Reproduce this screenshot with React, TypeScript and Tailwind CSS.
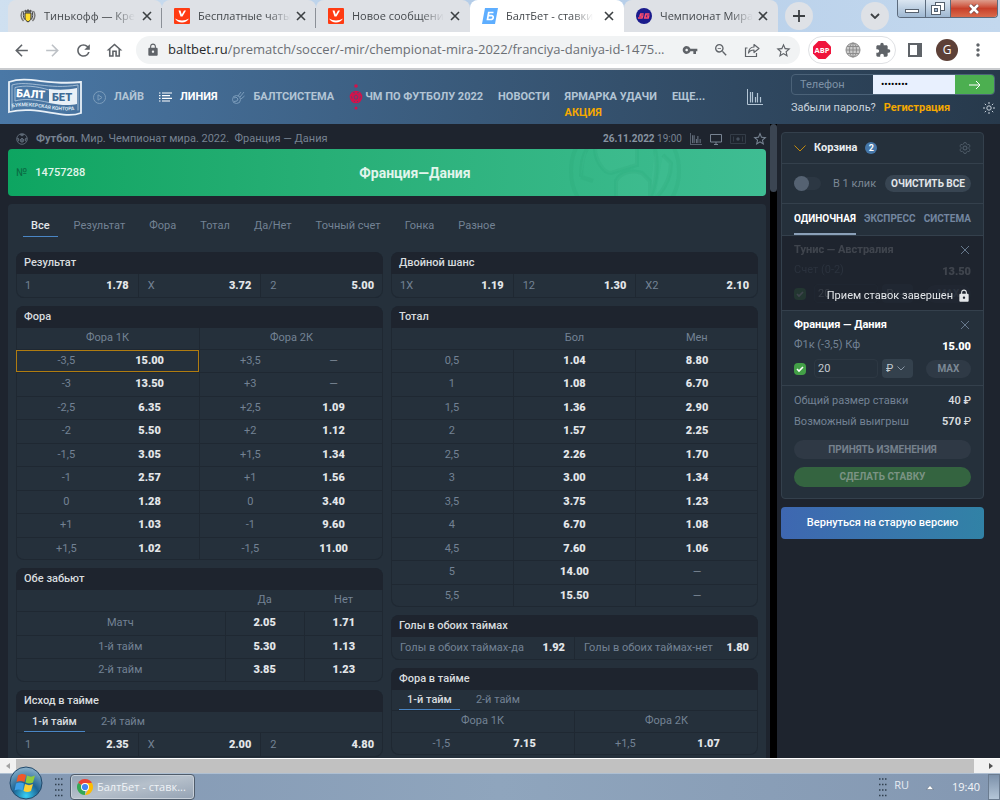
import type { ReactNode } from 'react';
import {
    MdArrowBack,
    MdArrowForward,
    MdExtension,
    MdLock,
    MdMoreVert,
    MdOutlineHome,
    MdOutlineZoomOut,
    MdRefresh,
    MdStarBorder,
    MdVpnKey,
} from 'react-icons/md';

type Outcome = [label: string, odds: string];

interface BrowserTab {
    title: string;
    icon: ReactNode;
    active?: boolean;
}

const handicap: [Outcome, Outcome][] = [
    [['-3,5', '15.00'], ['+3,5', '—']],
    [['-3', '13.50'], ['+3', '—']],
    [['-2,5', '6.35'], ['+2,5', '1.09']],
    [['-2', '5.50'], ['+2', '1.12']],
    [['-1,5', '3.05'], ['+1,5', '1.34']],
    [['-1', '2.57'], ['+1', '1.56']],
    [['0', '1.28'], ['0', '3.40']],
    [['+1', '1.03'], ['-1', '9.60']],
    [['+1,5', '1.02'], ['-1,5', '11.00']],
];

const totals = [
    ['0,5', '1.04', '8.80'],
    ['1', '1.08', '6.70'],
    ['1,5', '1.36', '2.90'],
    ['2', '1.57', '2.25'],
    ['2,5', '2.26', '1.70'],
    ['3', '3.00', '1.34'],
    ['3,5', '3.75', '1.23'],
    ['4', '6.70', '1.08'],
    ['4,5', '7.60', '1.06'],
    ['5', '14.00', '—'],
    ['5,5', '15.50', '—'],
];

const bothScore = [
    ['Матч', '2.05', '1.71'],
    ['1-й тайм', '5.30', '1.13'],
    ['2-й тайм', '3.85', '1.23'],
];

const marketTabs = ['Все', 'Результат', 'Фора', 'Тотал', 'Да/Нет', 'Точный счет', 'Гонка', 'Разное'];

/* ---------- icons ---------- */

function TinkoffIcon() {
    return (
        <svg viewBox="0 0 16 16" className="size-4" fill="none">
            <path d="M2.500 3c-1.800 3-1.800 7 1 10M13.500 3c1.800 3 1.800 7-1 10" stroke="#777" strokeWidth="1.400" />
            <path d="M4.300 2.500c-1.500 3-1.300 7 .4 9M11.700 2.500c1.500 3 1.300 7-.4 9" stroke="#444" />
            <path d="M5 1.500l1.500 1L8 1l1.500 1.500 1.500-1V4.500H5z" fill="#555" />
            <path d="M5 5h6v5c0 2-1.500 3-3 4-1.500-1-3-2-3-4z" fill="#ffdd2d" stroke="#333" />
        </svg>
    );
}

function ReviewIcon() {
    return (
        <svg viewBox="0 0 16 16" className="size-4">
            <rect width="16" height="16" rx="1" fill="#ff3b12" />
            <path d="M4.500 2.500h2l1.300 4 2.200-4h2L8.500 8.500h-2z" fill="#fff" />
            <path d="M1 10.500c4 2.500 10 2.500 14 0-1.500 2.500-4 4-7 4s-5.500-1.500-7-4z" fill="#fff" />
        </svg>
    );
}

function BaltbetIcon() {
    return (
        <svg viewBox="0 0 16 16" className="size-4">
            <path d="M3 0h13l-3 16H0z" fill="#5eaeff" />
            <path d="M11.500 4.500H6.700L5.500 11.500h3c3.300 0 3.600-3.800 1-3.800H6.300" fill="none" stroke="#fff" strokeWidth="1.700" />
        </svg>
    );
}

function SportIcon() {
    return (
        <svg viewBox="0 0 16 16" className="size-4">
            <circle cx="8" cy="8" r="8" fill="#1a1b8c" />
            <path d="M2 10h4l.7-2H4l.7-2h3M13.500 6H9.800L8.700 10h3.500l.5-2h-2" fill="none" stroke="#ff4d6d" strokeWidth="1.500" />
        </svg>
    );
}

function ChromeIcon() {
    return (
        <svg viewBox="0 0 16 16" className="size-4">
            <path d="M8 8L1.070 4A8 8 0 0 1 14.930 4z" fill="#ea4335" />
            <path d="M8 8v8A8 8 0 0 1 1.070 4z" fill="#34a853" />
            <path d="M8 4h6.930A8 8 0 0 1 8 16l3.500-6z" fill="#fbbc05" />
            <circle cx="8" cy="8" r="4" fill="#fff" />
            <circle cx="8" cy="8" r="3.100" fill="#4285f4" />
        </svg>
    );
}

function CrossIcon() {
    return (
        <svg viewBox="0 0 10 10" className="size-2.5">
            <path d="M1 1l8 8M9 1L1 9" stroke="currentColor" strokeWidth="1.600" />
        </svg>
    );
}

function ThinCross() {
    return (
        <svg viewBox="0 0 10 10" className="size-2.5">
            <path d="M1 1l8 8M9 1L1 9" stroke="#66788c" strokeWidth="1" />
        </svg>
    );
}

function ShareIcon() {
    return (
        <svg viewBox="0 0 16 16" className="size-4" fill="none" stroke="#5f6368" strokeWidth="1.200">
            <path d="M3.500 6H1.500v8.500h11V11" />
            <path d="M10 2.500l5 4-5 4V8c-3 0-4.500 1-5.500 3 .3-3.500 2.500-6 5.500-6z" strokeLinejoin="round" />
        </svg>
    );
}

function GlobeIcon() {
    return (
        <svg viewBox="0 0 16 16" className="size-4" fill="none" stroke="#8c8c8c">
            <circle cx="8" cy="8" r="7" fill="#ccc" />
            <path d="M8 1v14M1 8h14M2 4.500h12M2 11.500h12" />
            <ellipse cx="8" cy="8" rx="3.500" ry="7" />
        </svg>
    );
}

function StatsIcon({ className }: { className: string }) {
    return (
        <svg viewBox="0 0 16 16" className={className} fill="none" stroke="currentColor">
            <path d="M.5 0v15.500H16" />
            <path d="M3.500 3v10.500M5.500 3v10.500M8.500 8v5.500M10.500 4v9.500M13.500 8v5.500" strokeWidth="1.200" />
        </svg>
    );
}

function BallIcon() {
    return (
        <svg viewBox="0 0 12 12" className="size-3" fill="none" stroke="#5d6875">
            <circle cx="6" cy="6" r="5.300" />
            <path d="M4 1.500L6 3l2-1.500zM6 5L4 7l1 2h2l1-2zM1 5l2 1-1 2.500M11 5L9 6l1 2.500" fill="#4c5765" />
        </svg>
    );
}

function CupIcon() {
    return (
        <svg viewBox="0 0 14 28" className="h-7 w-3.5" fill="none">
            <circle cx="7" cy="3" r="1.800" fill="#d0134c" />
            <circle cx="7" cy="25" r="1.500" fill="#d0134c" />
            <circle cx="7" cy="14" r="6.300" fill="#d0134c" />
            <path d="M7 12l2 1.500-.8 2.500H5.800L5 13.500zM4 9.500l2 .5M8 10l2-.5M2.500 13.500l.5 2M11.500 13.500l-.5 2M5 18.500h1M8 18.500h1" stroke="#5b4672" />
        </svg>
    );
}

function LogoMark() {
    return (
        <svg viewBox="0 0 74 38" className="h-[38px] w-[74px]" fill="none">
            <path d="M1 4C20-3 40 8 73 4v31C54 42 30 27 1 34z" stroke="#e8f0f7" strokeWidth="1.800" />
            <path d="M4 31.500V7c17-5 36 5 66 0v25.500" stroke="#b9cde0" strokeWidth=".8" />
            <path d="M41 11c9 1 19 1 28-1v16c-8 2-18 1-28-1z" fill="#e8f0f7" />
            <path d="M41 12C28 8 17 7 7 9.500V23c10-3 22-1 34 1.500" stroke="#b9cde0" strokeWidth=".8" />
            <text x="8" y="19" fontFamily="Roboto" fontSize="11" fontWeight="900" fill="#fff" transform="rotate(3 8 19)">БАЛТ</text>
            <text x="44" y="23" fontFamily="Roboto" fontSize="11" fontWeight="900" fill="#3f6b95">БЕТ</text>
            <path id="motto" d="M4 29.500c24-5 40 6 66 2" />
            <text fontFamily="Roboto" fontSize="5" fontWeight="700" fill="#dbe7f1">
                <textPath href="#motto">БУКМЕКЕРСКАЯ КОНТОРА</textPath>
            </text>
        </svg>
    );
}

function StartOrb() {
    return (
        <svg viewBox="0 0 34 34" className="size-[34px]">
            <defs>
                <radialGradient id="orb" cx=".5" cy=".9" r=".9">
                    <stop offset="0" stopColor="#38d0f5" />
                    <stop offset=".45" stopColor="#1d6494" />
                    <stop offset="1" stopColor="#8fb4cd" />
                </radialGradient>
            </defs>
            <circle cx="17" cy="17" r="16" fill="url(#orb)" stroke="#21496b" />
            <path d="M9 9.500c3-2 5-2 8-.5L15.500 16c-3-1.500-5-1.500-8 0z" fill="#f0582a" />
            <path d="M18 9.500c3 1.500 5 1.500 8 0l-2 7c-3 1.500-5 1-7.500 0z" fill="#8fcb3c" />
            <path d="M7 17.500c3-1.500 5-1.500 8 0L13.500 24.500c-3-1.500-5-1.500-8 0z" fill="#3fa0e8" />
            <path d="M16 18c3 1.500 5 1.500 8 0l-2 7c-3 1.500-5 1-7.500 0z" fill="#fdcf33" />
        </svg>
    );
}

const browserTabs: BrowserTab[] = [
    { title: 'Тинькофф — Кре', icon: <TinkoffIcon /> },
    { title: 'Бесплатные чаты', icon: <ReviewIcon /> },
    { title: 'Новое сообщени', icon: <ReviewIcon /> },
    { title: 'БалтБет - ставки', icon: <BaltbetIcon />, active: true },
    { title: 'Чемпионат Мира', icon: <SportIcon /> },
];

/* ---------- browser ---------- */

function TabStrip() {
    return (
        <div className="flex h-8 shrink-0 items-center bg-gradient-to-r from-[#cfe0f0] via-[#b3cce8] to-[#c3d8ee] pl-2">
            {browserTabs.map((tab, i) => (
                <div
                    key={tab.title}
                    className={`relative flex h-full w-[154px] items-center rounded-t-lg pr-1.5 pl-3 ${tab.active ? 'bg-white' : 'bg-[#dee1e6]'}`}
                >
                    {tab.icon}
                    <span className="ml-2 text-[11px] whitespace-nowrap text-[#45494d] [mask-image:linear-gradient(to_right,black_75%,transparent)]">
                        {tab.title}
                    </span>
                    <button type="button" aria-label="Закрыть вкладку" className="ml-auto p-1 text-[#3c4043]">
                        <CrossIcon />
                    </button>
                    {i < 2 && <span className="absolute top-2 right-0 h-5 w-px bg-[#8b9097]" />}
                </div>
            ))}
            <button type="button" aria-label="Новая вкладка" className="ml-[7px] flex size-7 items-center justify-center rounded-full bg-[#dee1e6]">
                <svg viewBox="0 0 12 12" className="size-3">
                    <path d="M6 0v12M0 6h12" stroke="#3c4043" strokeWidth="1.800" />
                </svg>
            </button>
            <button type="button" aria-label="Поиск вкладок" className="ml-12 flex size-7 items-center justify-center rounded-full bg-[#dee1e6]">
                <svg viewBox="0 0 10 6" className="h-1.5 w-2.5">
                    <path d="M1 1l4 4 4-4" stroke="#3c4043" strokeWidth="1.800" fill="none" />
                </svg>
            </button>
            <div className="mr-0.5 ml-auto flex h-[18px] self-start overflow-hidden rounded-b border border-t-0 border-[#5c6b7d]">
                <button type="button" aria-label="Свернуть" className="flex w-7 items-end justify-center border-r border-[#5c6b7d] bg-gradient-to-b from-[#dbe6f1] to-[#9fb8d2] pb-1">
                    <span className="h-1 w-3.5 border border-[#55606d] bg-white" />
                </button>
                <button type="button" aria-label="Восстановить" className="flex w-[25px] items-center justify-center border-r border-[#5c6b7d] bg-gradient-to-b from-[#dbe6f1] to-[#9fb8d2]">
                    <svg viewBox="0 0 14 13" className="h-[13px] w-3.5" fill="#fff" stroke="#55606d">
                        <rect x="4.500" y=".5" width="9" height="8" />
                        <rect x=".5" y="3.500" width="9" height="9" />
                        <rect x="3.500" y="6.500" width="3" height="3" fill="#9fb8d2" />
                    </svg>
                </button>
                <button type="button" aria-label="Закрыть" className="flex w-[46px] items-center justify-center bg-gradient-to-b from-[#dd9c8c] via-[#c8402a] to-[#d96a4c]">
                    <svg viewBox="0 0 12 10" className="h-2.5 w-3">
                        <path d="M2 1l8 8M10 1L2 9" stroke="#6b3a3a" strokeWidth="4" />
                        <path d="M2 1l8 8M10 1L2 9" stroke="#fff" strokeWidth="2.600" />
                    </svg>
                </button>
            </div>
        </div>
    );
}

function Toolbar() {
    return (
        <div className="flex h-[38px] shrink-0 items-center border-b-2 border-[#c9cbce] bg-white pr-3 pl-3 text-[#5f6368]">
            <div className="flex items-center gap-3">
                <button type="button" aria-label="Назад"><MdArrowBack className="size-[19px]" /></button>
                <button type="button" aria-label="Вперед" className="text-[#bdc1c6]"><MdArrowForward className="size-[19px]" /></button>
                <button type="button" aria-label="Обновить"><MdRefresh className="size-[19px]" /></button>
                <button type="button" aria-label="Домой"><MdOutlineHome className="size-[19px]" /></button>
            </div>
            <div className="ml-3 flex h-7 min-w-0 flex-1 items-center rounded-full bg-[#f1f3f4] pr-2 pl-2.5">
                <MdLock className="size-3.5 shrink-0" />
                <span className="ml-2 min-w-0 flex-1 text-[13px] whitespace-nowrap text-[#6b6f74]">
                    <span className="text-[#27292c]">baltbet.ru</span>/prematch/soccer/-mir/chempionat-mira-2022/franciya-daniya-id-1475...
                </span>
                <div className="flex items-center gap-[15px] pl-2">
                    <MdVpnKey className="size-4" />
                    <MdOutlineZoomOut className="size-4" />
                    <ShareIcon />
                    <MdStarBorder className="size-[17px]" />
                </div>
            </div>
            <div className="ml-2 flex h-7 items-center gap-3.5 rounded-full border border-[#dfe1e4] px-1">
                <svg viewBox="0 0 18 18" className="size-[18px]">
                    <path d="M5.500 0h7L18 5.500v7L12.500 18h-7L0 12.500v-7z" fill="#f0143c" />
                    <text x="9" y="12" textAnchor="middle" fontFamily="Open Sans" fontSize="7.500" fontWeight="700" fill="#fff">ABP</text>
                </svg>
                <GlobeIcon />
                <MdExtension className="size-4" />
            </div>
            <div className="ml-3 flex items-center">
                <svg viewBox="0 0 14 14" className="size-3.5">
                    <path d="M1 1h12v12H1z" fill="none" stroke="currentColor" strokeWidth="2" />
                    <path d="M9 1h4v12H9z" fill="currentColor" />
                </svg>
                <span className="ml-3.5 flex size-[22px] items-center justify-center rounded-full bg-[#5d4037] text-xs text-white">G</span>
                <MdMoreVert className="ml-2.5 size-5" />
            </div>
        </div>
    );
}

/* ---------- site header ---------- */

function SiteHeader() {
    return (
        <header className="flex h-[54px] shrink-0 bg-gradient-to-r from-[#4a78a6] to-[#27394b] pr-[5px] pl-2">
            <a href="#" aria-label="БалтБет" className="self-center"><LogoMark /></a>
            <nav className="ml-[11px] flex flex-1 items-center gap-[15px] font-bold whitespace-nowrap text-[#b3c5d5]">
                <a href="#" className="flex items-center gap-2">
                    <svg viewBox="0 0 13 13" className="size-[13px] text-[#7c9dbb]" fill="none" stroke="currentColor">
                        <circle cx="6.500" cy="6.500" r="6" />
                        <path d="M5 3.800l4 2.700-4 2.700z" />
                    </svg>
                    ЛАЙВ
                </a>
                <a href="#" className="flex items-center gap-2 text-white">
                    <svg viewBox="0 0 13 10" className="h-2.5 w-[13px]" stroke="currentColor" strokeWidth="1.200">
                        <path d="M0 1h1.500M3 1h10M0 3.700h1.500M3 3.700h8M0 6.400h1.500M3 6.400h10M0 9h1.500M3 9h8" />
                    </svg>
                    ЛИНИЯ
                </a>
                <a href="#" className="flex items-center gap-2">
                    <svg viewBox="0 0 13 13" className="size-[13px] text-[#7c9dbb]" fill="none" stroke="currentColor">
                        <circle cx="4.500" cy="8.500" r="4" />
                        <path d="M2 7l2-1 2 2-1 2-3 .5M6 5l3-4M8 6l4-5M9 8l3.500-3" />
                    </svg>
                    БАЛТСИСТЕМА
                </a>
                <a href="#" className="flex items-center gap-0.5">
                    <CupIcon />
                    ЧМ ПО ФУТБОЛУ 2022
                </a>
                <a href="#">НОВОСТИ</a>
                <a href="#" className="relative">
                    ЯРМАРКА УДАЧИ
                    <span className="absolute top-full left-0 text-[#f5a800]">АКЦИЯ</span>
                </a>
                <a href="#">ЕЩЕ...</a>
                <a href="#" aria-label="Статистика" className="mr-7 ml-auto"><StatsIcon className="size-4" /></a>
            </nav>
            <form className="w-[204px] pt-1">
                <div className="flex h-[21px] overflow-hidden rounded border border-[#4b6278]">
                    <input aria-label="Телефон" placeholder="Телефон" className="w-[81px] px-2 text-white placeholder:text-[#7e92a6]" />
                    <input aria-label="Пароль" type="password" defaultValue="baltbet1" className="w-[82px] bg-[#e8f0fe] px-2 text-[10px] text-black" />
                    <button type="button" aria-label="Войти" className="flex flex-1 items-center justify-center bg-[#4caf50]">
                        <svg viewBox="0 0 12 10" className="h-2.5 w-3" fill="none" stroke="#fff">
                            <path d="M0 5h11M7 1l4 4-4 4" />
                        </svg>
                    </button>
                </div>
                <div className="mt-[5px] flex items-center text-[#c9d3dc]">
                    <a href="#">Забыли пароль?</a>
                    <a href="#" className="ml-2 font-bold text-[#f5a800]">Регистрация</a>
                    <button type="button" aria-label="Тема" className="ml-auto">
                        <svg viewBox="0 0 12 12" className="size-3" fill="none" stroke="#c9d3dc">
                            <circle cx="6" cy="6" r="2.200" />
                            <path d="M6 0v2M6 10v2M0 6h2M10 6h2M1.800 1.800l1.300 1.300M8.900 8.900l1.300 1.300M10.200 1.800L8.900 3.100M3.100 8.900l-1.300 1.300" />
                        </svg>
                    </button>
                </div>
            </form>
        </header>
    );
}

/* ---------- markets ---------- */

function Odds({ value }: { value: string }) {
    if (value === '—') return <span className="text-[#7b8794]">—</span>;
    return <span className="font-black text-[#e3e6e9]">{value}</span>;
}

function Panel({ title, children }: { title: string; children: ReactNode }) {
    return (
        <section className="overflow-hidden rounded-lg bg-[#25303b] inset-ring inset-ring-[#1f2832]">
            <h2 className="h-[22px] bg-[#1e242e] px-2 leading-[22px] font-medium text-[#d8dcdf]">{title}</h2>
            {children}
        </section>
    );
}

function OutcomeRow({ items, className }: { items: Outcome[]; className: string }) {
    return (
        <div className={`flex divide-x divide-[#1f2832] border-b border-[#1f2832] ${className}`}>
            {items.map(([label, odds]) => (
                <button type="button" key={label} className="flex flex-1 items-center justify-between px-[9px] text-[#738294]">
                    {label}
                    <Odds value={odds} />
                </button>
            ))}
        </div>
    );
}

function HandicapTable({ rows, picked }: { rows: [Outcome, Outcome][]; picked?: string }) {
    return (
        <table className="w-full table-fixed text-center text-[#738294]">
            <thead>
                <tr className="h-[21px] divide-x divide-[#1f2832]">
                    <th className="p-0 font-normal">Фора 1К</th>
                    <th className="p-0 font-normal">Фора 2К</th>
                </tr>
            </thead>
            <tbody>
                {rows.map((row) => (
                    <tr key={row[0][0]} className="divide-x divide-[#1f2832] border-t border-[#1f2832] odd:h-[23px] even:h-6">
                        {row.map(([label, odds], side) => (
                            <td key={side} className="h-[inherit] p-0">
                                <button
                                    type="button"
                                    className={`flex h-full w-full items-center ${side === 0 && label === picked ? 'outline -outline-offset-1 outline-[#b07c10]' : ''}`}
                                >
                                    <span className="w-[55%]">{label}</span>
                                    <span className="w-[36%]"><Odds value={odds} /></span>
                                </button>
                            </td>
                        ))}
                    </tr>
                ))}
            </tbody>
        </table>
    );
}

function HalfTabs() {
    return (
        <div className="flex h-[21px] border-b border-[#1f2832] px-2">
            <button type="button" className="border-b border-[#4a86c5] px-2 font-medium text-[#d8dcdf]">1-й тайм</button>
            <button type="button" className="ml-2 px-2 text-[#738294]">2-й тайм</button>
        </div>
    );
}

function EventHeader() {
    return (
        <div>
            <div className="flex h-[25px] items-center gap-2 pt-1 pl-2 text-[#768291]">
                <BallIcon />
                <p className="whitespace-pre"><b>Футбол.</b> Мир. Чемпионат мира. 2022.  Франция — Дания</p>
                <p className="ml-auto text-[10px]"><b className="text-[#8793a1]">26.11.2022</b> 19:00</p>
                <StatsIcon className="size-3" />
                <svg viewBox="0 0 12 12" className="size-3" fill="none" stroke="currentColor">
                    <path d="M.5 1.500h11v7.500H.5zM4 11.500h4M6 9v2.500" />
                </svg>
                <svg viewBox="0 0 16 12" className="h-3 w-4" fill="none" stroke="#343d48">
                    <path d="M.5 1.500h15v9H.5zM3.500 3.500v5M12.500 3.500v5" />
                    <circle cx="8" cy="6" r="1.500" fill="#4c5765" />
                </svg>
                <MdStarBorder className="-mx-0.5 size-4" />
            </div>
            <div className="relative flex h-[47px] items-center overflow-hidden rounded bg-gradient-to-r from-[#0da561] to-[#3fbd93] px-2 text-[#e1f5ec]">
                <svg viewBox="0 0 112 112" className="absolute top-[-34px] right-[85px] size-28" fill="none" stroke="#219b6d" strokeOpacity=".13" strokeWidth="4">
                    <circle cx="56" cy="56" r="54" />
                    <path d="M26 34c0 10 8 24 16 24l26-8V34M47 66c4-8 14-12 26-8l8 8v22H47zM86 34c4 20 0 40-6 50M86 84c10-10 16-22 16-36l-8-8M12 62c0-12 2-22 6-28M12 62l12 4" fill="#5ccaa5" fillOpacity=".12" />
                </svg>
                <span className="text-[#0a6a42]">№</span>
                <span className="ml-2 font-medium">14757288</span>
                <h1 className="absolute inset-x-0 pl-14 text-center text-sm font-bold">Франция—Дания</h1>
            </div>
        </div>
    );
}

function Markets() {
    return (
        <div className="mt-2 rounded-t bg-[#25303b] px-2 pb-2">
            <div className="flex h-12 items-start pt-3 pl-[7px]">
                {marketTabs.map((tab, i) => (
                    <button
                        type="button"
                        key={tab}
                        className={`mr-2 h-[21px] border-b px-2 ${i === 0 ? 'border-[#4a86c5] font-medium text-[#e3e6e9]' : 'border-transparent text-[#738294]'}`}
                    >
                        {tab}
                    </button>
                ))}
            </div>
            <div className="grid grid-cols-2 items-start gap-2">
                <div className="flex flex-col gap-2">
                    <Panel title="Результат">
                        <OutcomeRow className="h-6" items={[['1', '1.78'], ['X', '3.72'], ['2', '5.00']]} />
                    </Panel>
                    <Panel title="Фора">
                        <HandicapTable rows={handicap} picked="-3,5" />
                    </Panel>
                    <Panel title="Обе забьют">
                        <table className="w-full table-fixed text-center text-[#738294]">
                            <thead>
                                <tr className="h-[21px]">
                                    <th className="w-[57%] p-0" />
                                    <th className="p-0 font-normal">Да</th>
                                    <th className="p-0 font-normal">Нет</th>
                                </tr>
                            </thead>
                            <tbody>
                                {bothScore.map(([label, yes, no]) => (
                                    <tr key={label} className="divide-x divide-[#1f2832] border-t border-[#1f2832] odd:h-6 even:h-[23px]">
                                        <td className="p-0">{label}</td>
                                        <td className="p-0"><Odds value={yes} /></td>
                                        <td className="p-0"><Odds value={no} /></td>
                                    </tr>
                                ))}
                            </tbody>
                        </table>
                    </Panel>
                    <Panel title="Исход в тайме">
                        <HalfTabs />
                        <OutcomeRow className="h-6" items={[['1', '2.35'], ['X', '2.00'], ['2', '4.80']]} />
                    </Panel>
                </div>
                <div className="flex flex-col gap-2">
                    <Panel title="Двойной шанс">
                        <OutcomeRow className="h-6" items={[['1X', '1.19'], ['12', '1.30'], ['X2', '2.10']]} />
                    </Panel>
                    <Panel title="Тотал">
                        <table className="w-full table-fixed text-center text-[#738294]">
                            <thead>
                                <tr className="h-[21px]">
                                    <th className="p-0" />
                                    <th className="p-0 font-normal">Бол</th>
                                    <th className="p-0 font-normal">Мен</th>
                                </tr>
                            </thead>
                            <tbody>
                                {totals.map(([label, over, under]) => (
                                    <tr key={label} className="divide-x divide-[#1f2832] border-t border-[#1f2832] odd:h-[23px] even:h-6">
                                        <td className="p-0">{label}</td>
                                        <td className="p-0"><Odds value={over} /></td>
                                        <td className="p-0"><Odds value={under} /></td>
                                    </tr>
                                ))}
                            </tbody>
                        </table>
                    </Panel>
                    <Panel title="Голы в обоих таймах">
                        <OutcomeRow className="h-[23px]" items={[['Голы в обоих таймах-да', '1.92'], ['Голы в обоих таймах-нет', '1.80']]} />
                    </Panel>
                    <Panel title="Фора в тайме">
                        <HalfTabs />
                        <HandicapTable rows={[[['-1,5', '7.15'], ['+1,5', '1.07']]]} />
                    </Panel>
                </div>
            </div>
        </div>
    );
}

/* ---------- bet slip ---------- */

interface BetProps {
    teams: string;
    market: string;
    odds: string;
}

function Bet({ teams, market, odds }: BetProps) {
    return (
        <div className="px-3 pt-1 pb-[7px]">
            <div className="flex h-5 items-center justify-between pr-px">
                <h3 className="font-bold text-white">{teams}</h3>
                <button type="button" aria-label="Удалить"><ThinCross /></button>
            </div>
            <div className="flex h-5 items-center justify-between">
                <span className="text-[#738294]">{market}</span>
                <span className="pt-1 font-black text-white">{odds}</span>
            </div>
            <div className="mt-1 flex h-[19px] items-center">
                <label className="relative flex size-3 items-center justify-center">
                    <input type="checkbox" defaultChecked aria-label="Выбрать ставку" className="size-3 appearance-none rounded-sm bg-[#43a047]" />
                    <svg viewBox="0 0 8 8" className="pointer-events-none absolute size-2" fill="none" stroke="#fff" strokeWidth="1.600">
                        <path d="M1 4l2 2 4-4" />
                    </svg>
                </label>
                <input aria-label="Сумма ставки" defaultValue="20" className="ml-2 h-[19px] w-16 rounded border border-[#2d3843] px-[3px] text-[#c3cad1]" />
                <div className="relative ml-1">
                    <select aria-label="Валюта" className="h-[19px] w-[31px] appearance-none rounded-sm bg-[#34414d] pl-1 text-[#c3cad1]">
                        <option>₽</option>
                    </select>
                    <svg viewBox="0 0 8 5" className="pointer-events-none absolute top-[7px] right-2 h-[5px] w-2" fill="none" stroke="#8795a4">
                        <path d="M.5.5L4 4 7.500.5" />
                    </svg>
                </div>
                <button type="button" className="ml-auto h-[18px] w-[45px] rounded-full bg-[#2f3a46] text-[10px] font-bold text-[#7b8794]">MAX</button>
            </div>
        </div>
    );
}

function BetSlip() {
    return (
        <aside className="w-[223px] shrink-0 bg-[#1e242e] pt-2 pr-4 pl-1">
            <div className="divide-y divide-[#34404c] overflow-hidden rounded border border-[#34404c] bg-[#25303b]">
                <div className="flex h-[31px] items-center px-3">
                    <svg viewBox="0 0 12 7" className="h-[7px] w-3" fill="none" stroke="#c48a0c">
                        <path d="M.5.5L6 6 11.500.5" />
                    </svg>
                    <h2 className="ml-2 font-bold text-[#e9edf0]">Корзина</h2>
                    <span className="ml-2 flex size-3 items-center justify-center rounded-full bg-[#4576a8] text-[9px] font-bold text-white">2</span>
                    <button type="button" aria-label="Настройки" className="ml-auto">
                        <svg viewBox="0 0 12 12" className="size-3" fill="none" stroke="#55626f">
                            <circle cx="6" cy="6" r="2" />
                            <path d="M5 .6h2l.5 1.500 1 .6 1.600-.3 1 1.700-1.100 1.200v1.400l1.100 1.200-1 1.700-1.600-.3-1 .6L7 11.400H5l-.5-1.500-1-.6-1.600.3-1-1.700L2 6.700V5.300L.9 4.100l1-1.700 1.600.3 1-.6z" strokeWidth=".8" />
                        </svg>
                    </button>
                </div>
                <div className="flex h-10 items-center px-3">
                    <label className="flex items-center text-[#7b8794]">
                        <span className="relative h-[13px] w-[27px] rounded-full bg-[#2c3743]">
                            <input type="checkbox" role="switch" className="absolute -top-px left-0 size-[15px] appearance-none rounded-full bg-[#556272]" />
                        </span>
                        <span className="ml-3">В 1 клик</span>
                    </label>
                    <button type="button" className="ml-auto h-[17px] w-[86px] rounded-full bg-[#384552] text-[10px] font-bold text-[#e3e6e9]">ОЧИСТИТЬ ВСЕ</button>
                </div>
                <div className="flex h-8 items-end justify-between px-3 text-[10px] font-bold text-[#7386a0]">
                    <button type="button" className="h-7 border-b-2 border-[#8ba0b8] pb-0.5 text-white">ОДИНОЧНАЯ</button>
                    <button type="button" className="h-7 pb-1">ЭКСПРЕСС</button>
                    <button type="button" className="h-7 pb-1">СИСТЕМА</button>
                </div>
                <div className="relative bg-[#1e242e]">
                    <div className="opacity-15">
                        <Bet teams="Тунис — Австралия" market="Счет (0-2)" odds="13.50" />
                    </div>
                    <button type="button" aria-label="Удалить" className="absolute top-[9px] right-[13px]"><ThinCross /></button>
                    <p className="absolute right-3 bottom-1.5 flex items-center gap-1 text-[#e3e6e9]">
                        Прием ставок завершен
                        <MdLock className="size-3.5" />
                    </p>
                </div>
                <Bet teams="Франция — Дания" market="Ф1к (-3,5) Кф" odds="15.00" />
                <div className="px-3 pt-1 pb-[11px] text-[#738294]">
                    <dl>
                        <div className="flex h-[21px] items-center justify-between">
                            <dt>Общий размер ставки</dt>
                            <dd className="font-medium text-[#d8dcdf]">40 ₽</dd>
                        </div>
                        <div className="flex h-[21px] items-center justify-between">
                            <dt>Возможный выигрыш</dt>
                            <dd className="text-[#d8dcdf]"><b>570</b> ₽</dd>
                        </div>
                    </dl>
                    <button type="button" className="mt-2 block h-[19px] w-full rounded-full bg-[#2f3945] text-[10px] font-bold text-[#76818d]">ПРИНЯТЬ ИЗМЕНЕНИЯ</button>
                    <button type="button" className="mt-2 block h-5 w-full rounded-full bg-[#346440] text-[10px] font-bold text-[#7b9384]">СДЕЛАТЬ СТАВКУ</button>
                </div>
            </div>
            <button type="button" className="mt-2 h-8 w-full rounded bg-gradient-to-r from-[#3e67b1] to-[#3182a6] font-medium text-white">
                Вернуться на старую версию
            </button>
        </aside>
    );
}

/* ---------- desktop ---------- */

function HorizontalScrollbar() {
    return (
        <div className="flex h-[15px] shrink-0 items-stretch border-t border-white bg-[#f1f1f1]">
            <button type="button" aria-label="Влево" className="flex w-4 items-center justify-center text-[#a3a3a3]">
                <svg viewBox="0 0 4 6" className="h-1.5 w-1"><path d="M4 0v6L0 3z" fill="currentColor" /></svg>
            </button>
            <div className="flex-1 bg-[#c1c1c1]" />
            <button type="button" aria-label="Вправо" className="flex w-[26px] items-center justify-center pl-2 text-[#505050]">
                <svg viewBox="0 0 4 6" className="h-1.5 w-1"><path d="M0 0v6l4-3z" fill="currentColor" /></svg>
            </button>
        </div>
    );
}

function Grip() {
    return (
        <svg viewBox="0 0 10 20" className="h-5 w-2.5" fill="none">
            <path d="M1 2h9M1 7.500h9M1 13h9M1 18.500h9" stroke="#31404f" strokeWidth="1.500" strokeDasharray="1.500 1.500" />
        </svg>
    );
}

function Taskbar() {
    return (
        <footer className="flex h-[27px] shrink-0 items-center border-t border-[#aebfd2] bg-gradient-to-r from-[#8398b3] via-[#8fa5bd] to-[#8498b2] pl-[9px] text-[11px]">
            <button type="button" aria-label="Пуск" className="relative -top-1"><StartOrb /></button>
            <span className="ml-[11px]"><Grip /></span>
            <button type="button" className="ml-1.5 flex h-[26px] w-[125px] items-center gap-1 rounded-sm border border-[#4f5c6b] bg-gradient-to-br from-[#93a3b5] via-[#b6c0cb] to-[#94a2b3] pl-1.5 text-[#eef2f6] inset-ring inset-ring-[#c8d0d9]">
                <ChromeIcon />
                БалтБет - ставк...
            </button>
            <span className="ml-auto"><Grip /></span>
            <span className="ml-1.5 pb-1 text-[#e6ecf3]">RU</span>
            <svg viewBox="0 0 8 5" className="ml-[17px] h-[5px] w-2">
                <path d="M4 .5L7.500 4.500h-7z" fill="#fff" stroke="#5a6878" strokeWidth=".5" />
            </svg>
            <time className="ml-[18px] text-[#f2f5f8]">19:40</time>
            <span className="ml-2 h-full w-3 border border-[#6b7c90] bg-gradient-to-b from-[#7c91aa] to-[#b5c6d8]" />
        </footer>
    );
}

export default function App() {
    return (
        <div className="flex h-screen flex-col overflow-hidden bg-[#1e242e] font-['Open_Sans',sans-serif]">
            <TabStrip />
            <Toolbar />
            <div className="flex min-h-0 flex-1 flex-col font-[Roboto,sans-serif] text-[11px] leading-4">
                <SiteHeader />
                <div className="flex min-h-0 flex-1">
                    <main className="min-w-0 flex-1 overflow-hidden pr-1 pl-2">
                        <EventHeader />
                        <Markets />
                    </main>
                    <div className="w-[7px] bg-black">
                        <div className="h-[68px] rounded-full bg-[#3b4552]" />
                    </div>
                    <BetSlip />
                </div>
            </div>
            <HorizontalScrollbar />
            <Taskbar />
        </div>
    );
}
